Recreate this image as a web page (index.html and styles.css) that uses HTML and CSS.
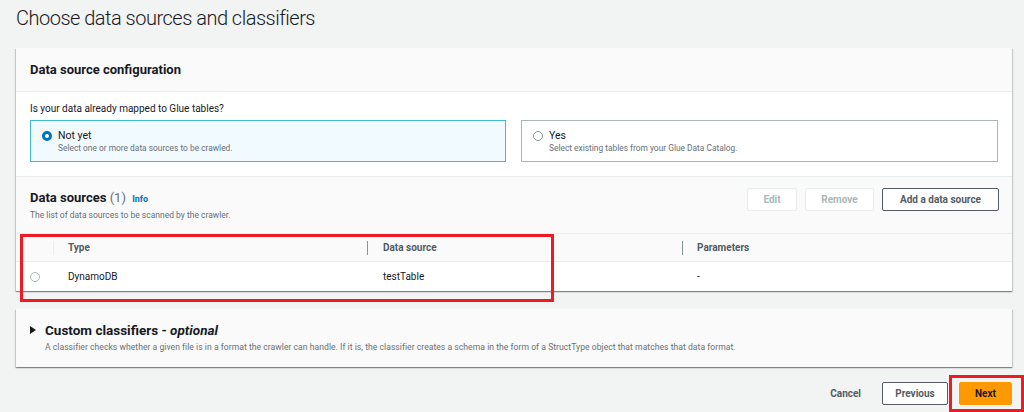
FILE: index.html
```html
<!DOCTYPE html>
<html lang="en">
<head>
<meta charset="utf-8">
<title>Choose data sources and classifiers</title>
<link rel="stylesheet" href="styles.css">
</head>
<body>
<div class="page">
  <h1 class="title">Choose data sources and classifiers</h1>

  <section class="panel">
    <div class="panel-header">
      <h2 class="panel-title">Data source configuration</h2>
    </div>
    <div class="panel-body">
      <div class="question">Is your data already mapped to Glue tables?</div>
      <div class="tiles">
        <div class="tile selected">
          <span class="radio checked"></span>
          <div class="tile-text">
            <div class="tile-label">Not yet</div>
            <div class="tile-desc">Select one or more data sources to be crawled.</div>
          </div>
        </div>
        <div class="tile">
          <span class="radio"></span>
          <div class="tile-text">
            <div class="tile-label">Yes</div>
            <div class="tile-desc">Select existing tables from your Glue Data Catalog.</div>
          </div>
        </div>
      </div>
    </div>
    <div class="sources-header">
      <div class="sources-heading">
        <h2 class="sources-title">Data sources <span class="count">(1)</span> <span class="info">Info</span></h2>
        <div class="sources-desc">The list of data sources to be scanned by the crawler.</div>
      </div>
      <div class="actions">
        <button class="btn disabled">Edit</button>
        <button class="btn disabled">Remove</button>
        <button class="btn normal">Add a data source</button>
      </div>
    </div>
    <div class="table">
      <div class="row head">
        <div class="cell c-sel"></div>
        <div class="cell c-type"><span class="sep light"></span>Type</div>
        <div class="cell c-src"><span class="sep"></span>Data source</div>
        <div class="cell c-param"><span class="sep"></span>Parameters</div>
      </div>
      <div class="row body">
        <div class="cell c-sel"><span class="radio small"></span></div>
        <div class="cell c-type">DynamoDB</div>
        <div class="cell c-src">testTable</div>
        <div class="cell c-param">-</div>
      </div>
    </div>
  </section>

  <section class="panel expander">
    <div class="exp-head">
      <span class="caret"></span>
      <h2 class="exp-title">Custom classifiers - <em>optional</em></h2>
    </div>
    <div class="exp-desc">A classifier checks whether a given file is in a format the crawler can handle. If it is, the classifier creates a schema in the form of a StructType object that matches that data format.</div>
  </section>

  <div class="footer">
    <button class="btn link">Cancel</button>
    <button class="btn normal">Previous</button>
    <button class="btn primary">Next</button>
  </div>

  <div class="mark mark-table"></div>
  <div class="mark mark-next"></div>
</div>
</body>
</html>
```

FILE: styles.css
```css
* { box-sizing: border-box; }
html, body { margin: 0; padding: 0; }
body {
  background: #f2f3f3;
  font-family: Roboto, "Open Sans", "Liberation Sans", sans-serif;
  color: #16191f;
  width: 1024px;
  height: 412px;
  overflow: hidden;
}
.page {
  position: relative;
  padding: 0 12px 0 16px;
}
.title {
  margin: 0;
  padding-top: 6px;
  height: 48px;
  font-size: 20px;
  font-weight: 300;
  letter-spacing: -0.5px;
  color: #16191f;
}
.panel {
  background: #fff;
  box-shadow: 0 1px 1px 0 rgba(0,28,36,.3), 1px 1px 1px 0 rgba(0,28,36,.15), -1px 1px 1px 0 rgba(0,28,36,.15);
}
.panel-header {
  height: 44px;
  background: #fafafa;
  border-bottom: 1px solid #eaeded;
  padding: 0 14px;
  display: flex;
  align-items: center;
}
.panel-title {
  margin: 0;
  font-size: 13px;
  font-weight: 700;
}
.panel-body {
  padding: 11px 14px 14px;
  height: 84px;
}
.question {
  font-size: 10px;
  line-height: 12px;
  color: #16191f;
  margin-bottom: 5px;
}
.tiles {
  display: grid;
  grid-template-columns: 476px 477px;
  column-gap: 15px;
}
.tile {
  height: 42px;
  border: 1px solid #aab7b8;
  display: flex;
  align-items: flex-start;
  padding: 8px 11px;
  gap: 6px;
  background: #fff;
}
.tile.selected {
  border-color: #44b9d6;
  background: #f1faff;
}
.radio {
  width: 10px;
  height: 10px;
  border-radius: 50%;
  border: 1px solid #879596;
  background: #fff;
  flex: none;
  margin-top: 2px;
}
.radio.checked {
  border: 3px solid #0073bb;
}
.tile-label {
  font-size: 10.5px;
  line-height: 13px;
}
.tile-desc {
  font-size: 8.4px;
  line-height: 13px;
  color: #687078;
}
.sources-header {
  height: 57px;
  background: #fafafa;
  border-top: 1px solid #eaeded;
  padding: 11px 13px 0 14px;
  display: flex;
  justify-content: space-between;
  align-items: flex-start;
}
.sources-title {
  margin: 0;
  font-size: 13px;
  font-weight: 700;
  line-height: 20px;
}
.count {
  font-weight: 400;
  color: #687078;
}
.info {
  font-size: 9px;
  font-weight: 700;
  color: #0073bb;
  margin-left: 3px;
}
.sources-desc {
  font-size: 8.5px;
  color: #687078;
  line-height: 12px;
}
.actions {
  display: flex;
  gap: 8px;
}
.btn {
  font-family: inherit;
  height: 23px;
  padding: 0 14px;
  font-size: 10px;
  font-weight: 700;
  border-radius: 2px;
  border: 1px solid #545b64;
  background: #fff;
  color: #545b64;
  cursor: pointer;
}
.btn.disabled {
  border-color: #eaeded;
  color: #aab7b8;
  background: #fff;
}
.actions .btn:nth-child(1) { width: 50px; }
.actions .btn:nth-child(2) { width: 69px; }
.actions .btn:nth-child(3) { width: 117px; }
.table { font-size: 10px; }
.row { display: flex; }
.row.head {
  height: 29px;
  background: #fafafa;
  border-top: 1px solid #eaeded;
  border-bottom: 1px solid #eaeded;
  font-weight: 700;
  color: #545b64;
}
.row.body {
  height: 29px;
  background: #fff;
}
.cell {
  position: relative;
  display: flex;
  align-items: center;
  padding-left: 15px;
}
.c-sel { width: 37px; padding-left: 14px; }
.c-type { width: 314px; }
.c-src { width: 315px; padding-left: 16px; }
.c-param { flex: 1; }
.sep {
  position: absolute;
  left: 0;
  top: 7px;
  height: 14px;
  width: 1px;
  background: #879596;
}
.sep.light { background: #eaeded; }
.radio.small { margin-top: 0; border-color: #aab7b8; }
.expander {
  margin-top: 18px;
  height: 58px;
  background: #fafafa;
  padding: 12px 14px 0;
}
.exp-head {
  display: flex;
  align-items: center;
  gap: 9px;
}
.caret {
  width: 0;
  height: 0;
  border-left: 6px solid #16191f;
  border-top: 4px solid transparent;
  border-bottom: 4px solid transparent;
}
.exp-title {
  margin: 0;
  font-size: 13.5px;
  font-weight: 700;
  line-height: 18px;
}
.exp-desc {
  margin-left: 15px;
  margin-top: 2px;
  font-size: 8.6px;
  letter-spacing: 0.03px;
  color: #687078;
  line-height: 12px;
  white-space: nowrap;
}
.footer {
  display: flex;
  justify-content: flex-end;
  align-items: center;
  margin-top: 15px;
  gap: 0;
}
.btn.link {
  border: none;
  background: transparent;
  color: #545b64;
  padding: 0;
  margin-right: 21px;
}
.footer .btn.normal { width: 66px; padding: 0; }
.btn.primary {
  width: 53px;
  padding: 0;
  margin-left: 11px;
  background: #ff9900;
  border-color: #ff9900;
  color: #16191f;
}
.mark {
  position: absolute;
  border: 3px solid #ed1c24;
  pointer-events: none;
}
.mark-table { left: 20px; top: 234px; width: 534px; height: 68px; }
.mark-next { left: 949px; top: 375px; width: 75px; height: 37px; }
```
